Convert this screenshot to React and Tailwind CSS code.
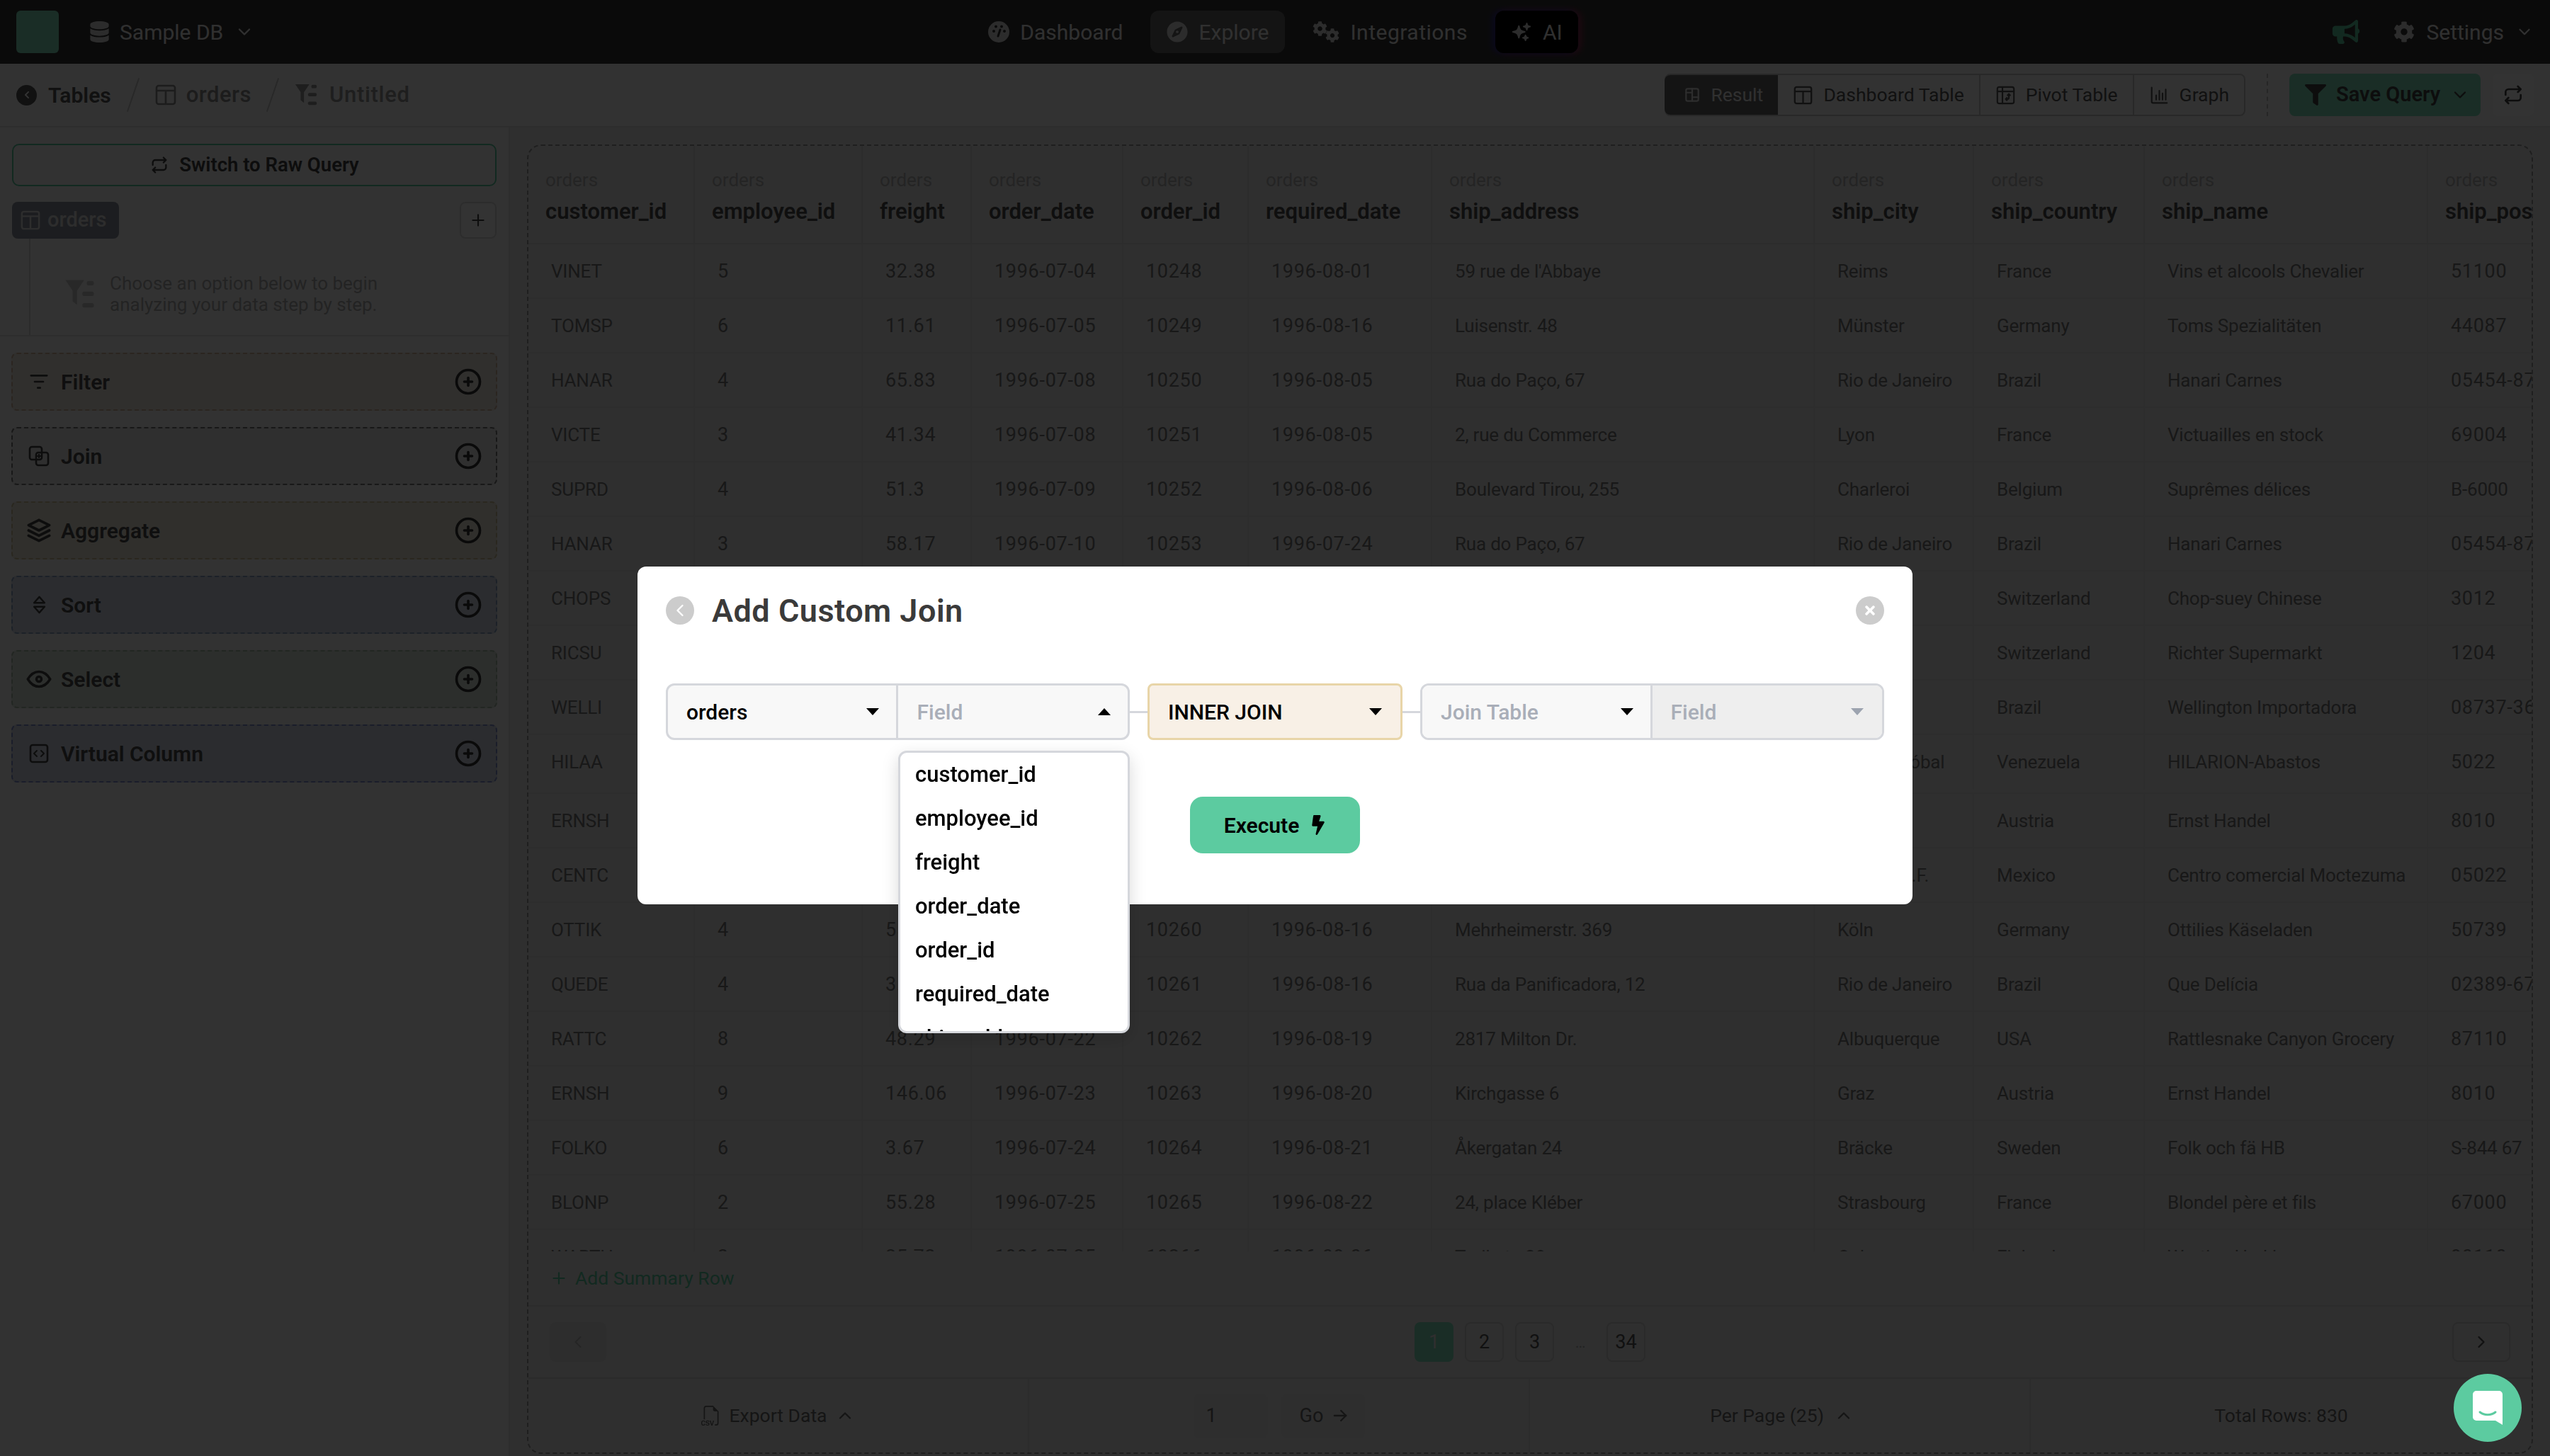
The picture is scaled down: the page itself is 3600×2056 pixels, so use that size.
import { FaCompass, FaCog, FaBullhorn, FaFilter, FaDatabase, FaChevronLeft, FaTimes, FaBolt } from "react-icons/fa";
import { HiSparkles } from "react-icons/hi2";
import { TbChevronDown, TbChevronUp, TbChevronLeft, TbChevronRight, TbPlus, TbCirclePlus, TbStack2, TbEye, TbArrowRight, TbLayoutBoard, TbRepeat } from "react-icons/tb";
import { BsFiletypeCsv } from "react-icons/bs";

const columns = [
  ["customer_id", 235],
  ["employee_id", 237],
  ["freight", 154],
  ["order_date", 214],
  ["order_id", 177],
  ["required_date", 259],
  ["ship_address", 540],
  ["ship_city", 225],
  ["ship_country", 241],
  ["ship_name", 400],
  ["ship_postal_code", 260],
];

const rows = [
  ["VINET", "5", "32.38", "1996-07-04", "10248", "1996-08-01", "59 rue de l'Abbaye", "Reims", "France", "Vins et alcools Chevalier", "51100"],
  ["TOMSP", "6", "11.61", "1996-07-05", "10249", "1996-08-16", "Luisenstr. 48", "Münster", "Germany", "Toms Spezialitäten", "44087"],
  ["HANAR", "4", "65.83", "1996-07-08", "10250", "1996-08-05", "Rua do Paço, 67", "Rio de Janeiro", "Brazil", "Hanari Carnes", "05454-876"],
  ["VICTE", "3", "41.34", "1996-07-08", "10251", "1996-08-05", "2, rue du Commerce", "Lyon", "France", "Victuailles en stock", "69004"],
  ["SUPRD", "4", "51.3", "1996-07-09", "10252", "1996-08-06", "Boulevard Tirou, 255", "Charleroi", "Belgium", "Suprêmes délices", "B-6000"],
  ["HANAR", "3", "58.17", "1996-07-10", "10253", "1996-07-24", "Rua do Paço, 67", "Rio de Janeiro", "Brazil", "Hanari Carnes", "05454-876"],
  ["CHOPS", "5", "22.98", "1996-07-11", "10254", "1996-08-08", "Hauptstr. 31", "Bern", "Switzerland", "Chop-suey Chinese", "3012"],
  ["RICSU", "9", "148.33", "1996-07-12", "10255", "1996-08-09", "Starenweg 5", "Genève", "Switzerland", "Richter Supermarkt", "1204"],
  ["WELLI", "3", "13.97", "1996-07-15", "10256", "1996-08-12", "Rua do Mercado, 12", "Resende", "Brazil", "Wellington Importadora", "08737-363"],
  ["HILAA", "4", "81.91", "1996-07-16", "10257", "1996-08-13", "Carrera 22 con Ave.", "San Cristóbal", "Venezuela", "HILARION-Abastos", "5022"],
  ["ERNSH", "1", "140.51", "1996-07-17", "10258", "1996-08-14", "Kirchgasse 6", "Graz", "Austria", "Ernst Handel", "8010"],
  ["CENTC", "4", "3.25", "1996-07-18", "10259", "1996-08-15", "Sierras de Granada 9993", "México D.F.", "Mexico", "Centro comercial Moctezuma", "05022"],
  ["OTTIK", "4", "55.09", "1996-07-19", "10260", "1996-08-16", "Mehrheimerstr. 369", "Köln", "Germany", "Ottilies Käseladen", "50739"],
  ["QUEDE", "4", "3.05", "1996-07-19", "10261", "1996-08-16", "Rua da Panificadora, 12", "Rio de Janeiro", "Brazil", "Que Delícia", "02389-673"],
  ["RATTC", "8", "48.29", "1996-07-22", "10262", "1996-08-19", "2817 Milton Dr.", "Albuquerque", "USA", "Rattlesnake Canyon Grocery", "87110"],
  ["ERNSH", "9", "146.06", "1996-07-23", "10263", "1996-08-20", "Kirchgasse 6", "Graz", "Austria", "Ernst Handel", "8010"],
  ["FOLKO", "6", "3.67", "1996-07-24", "10264", "1996-08-21", "Åkergatan 24", "Bräcke", "Sweden", "Folk och fä HB", "S-844 67"],
  ["BLONP", "2", "55.28", "1996-07-25", "10265", "1996-08-22", "24, place Kléber", "Strasbourg", "France", "Blondel père et fils", "67000"],
  ["WARTH", "3", "25.73", "1996-07-25", "10266", "1996-09-06", "Torikatu 38", "Oulu", "Finland", "Wartian Herkku", "90110"],
];

const fieldOptions = ["customer_id", "employee_id", "freight", "order_date", "order_id", "required_date", "ship_address"];

function GaugeIcon({ className }) {
  return (
    <svg viewBox="0 0 30 30" className={className}>
      <circle cx="15" cy="15" r="15" fill="currentColor" />
      <circle cx="8" cy="14" r="2" fill="#343434" />
      <circle cx="11" cy="7.5" r="2" fill="#343434" />
      <circle cx="19" cy="7.5" r="2" fill="#343434" />
      <circle cx="23" cy="14" r="2" fill="#343434" />
      <path d="M14 21l3-9" stroke="#343434" strokeWidth="3" strokeLinecap="round" />
    </svg>
  );
}

function GearsIcon() {
  return (
    <span className="flex w-[38px] h-[30px] shrink-0 text-[#dddddd]">
      <FaCog className="w-[21px] h-[21px] shrink-0 self-start" />
      <FaCog className="w-[20px] h-[20px] shrink-0 self-end -ml-[3px]" />
    </span>
  );
}

function TableSplitIcon({ className }) {
  return (
    <svg viewBox="0 0 30 30" className={className} fill="none" stroke="currentColor" strokeWidth="2.6" strokeLinejoin="round">
      <rect x="2" y="2" width="26" height="26" rx="3" />
      <path d="M2 9h26M15 9v19" />
    </svg>
  );
}

function PivotIcon({ className }) {
  return (
    <svg viewBox="0 0 30 30" className={className} fill="none" stroke="currentColor" strokeWidth="2.4" strokeLinejoin="round" strokeLinecap="round">
      <rect x="2" y="2" width="26" height="26" rx="3" />
      <path d="M2 9h26M10 2v26M20 13v6a2 2 0 0 1-2 2h-3M18 15l2-2 2 2M17 19l-2 2 2 2" />
    </svg>
  );
}

function GraphIcon({ className }) {
  return (
    <svg viewBox="0 0 30 30" className={className} fill="none" stroke="currentColor" strokeWidth="2.4" strokeLinecap="round">
      <path d="M3 3v22a2 2 0 0 0 2 2h22M10 22v-7M15 22V8M20 22V12M25 22V6" />
    </svg>
  );
}

function FilterLinesIcon({ className }) {
  return (
    <svg viewBox="0 0 30 30" className={className} fill="none" stroke="currentColor" strokeWidth="3" strokeLinecap="round">
      <path d="M2 5h26M8 15h14M13 25h4" />
    </svg>
  );
}

function JoinIcon({ className }) {
  return (
    <svg viewBox="0 0 30 30" className={className} fill="none" stroke="currentColor" strokeWidth="2.6" strokeLinejoin="round">
      <rect x="2" y="2" width="17" height="18" rx="3" />
      <rect x="11" y="10" width="17" height="18" rx="3" />
      <path d="M15 12v6M12 15h6" strokeWidth="2" />
    </svg>
  );
}

function SortIcon({ className }) {
  return (
    <svg viewBox="0 0 20 28" className={className} fill="none" stroke="currentColor" strokeWidth="2.6" strokeLinejoin="round">
      <path d="M10 2l8 9H2zM10 26L2 17h16z" />
    </svg>
  );
}

function CodeBoxIcon({ className }) {
  return (
    <svg viewBox="0 0 28 28" className={className} fill="none" stroke="currentColor" strokeWidth="2.6" strokeLinecap="round" strokeLinejoin="round">
      <rect x="2" y="2" width="24" height="24" rx="3" />
      <path d="M11 10l-4 4 4 4M17 10l4 4-4 4" strokeWidth="2" />
    </svg>
  );
}

function FunnelListIcon({ className }) {
  return (
    <svg viewBox="0 0 34 36" className={className} fill="currentColor">
      <path d="M1 2h21l-8 12v16l-5-4V14z" />
      <rect x="25" y="3" width="8" height="5" rx="2" />
      <rect x="20" y="15" width="13" height="5" rx="2" />
      <rect x="20" y="28" width="13" height="5" rx="2" />
    </svg>
  );
}

function Caret({ up, className }) {
  return (
    <svg viewBox="0 0 18 10" className={`w-[18px] h-[10px] ${className || ""}`} fill="currentColor">
      <path d={up ? "M9 0l9 10H0z" : "M0 0h18L9 10z"} />
    </svg>
  );
}

function NavItem({ icon: Icon, label, active, labelClass }) {
  return (
    <div className={`flex items-center gap-[15px] h-[60px] px-[23px] rounded-[12px] ${active ? "bg-[#646464]" : ""}`}>
      <Icon className="w-[30px] h-[30px] text-[#dddddd]" />
      <span className={`text-[30px] text-[#f0f0f0] ${labelClass || ""}`}>{label}</span>
    </div>
  );
}

function ViewTab({ icon: Icon, label, border }) {
  return (
    <div className={`flex items-center gap-[15px] h-full pl-[22px] pr-[21px] ${border ? "border-r-2 border-[#c8c8c8]" : ""}`}>
      <Icon className="w-[27px] h-[27px] text-[#555555]" />
      <span className="text-[26.5px] text-[#555555]">{label}</span>
    </div>
  );
}

function ActionCard({ icon: Icon, label, iconClass, className }) {
  return (
    <div className={`flex items-center justify-between h-[82px] pl-[22px] pr-[17px] rounded-[8px] border-2 border-dashed ${className}`}>
      <div className="flex items-center gap-[16px]">
        <span className="flex items-center justify-center w-[30px] h-[30px]">
          <Icon className={`shrink-0 text-[#444444] ${iconClass}`} />
        </span>
        <span className="text-[30px] font-semibold text-[#4a4a4a]">{label}</span>
      </div>
      <TbCirclePlus className="w-[44px] h-[44px] text-[#333333]" />
    </div>
  );
}

function PageBtn({ label, active }) {
  return (
    <div className={`flex items-center justify-center w-[55px] h-[56px] rounded-[8px] text-[27px] ${active ? "bg-[#80e0bc] text-[#e8e8e8]" : "border-2 border-[#cfcfcf] text-[#555555]"}`}>
      {label}
    </div>
  );
}

function DataTable() {
  return (
    <div className="h-[1561px] overflow-hidden">
      <div className="flex h-[139px] border-b-2 border-[#dcdcdc]">
        {columns.map(([name, width]) => (
          <div
            key={name}
            className="shrink-0 flex flex-col pl-[24px] pt-[33px] border-r-2 border-[#dcdcdc] overflow-hidden"
            style={{ width }}
          >
            <span className="text-[26px] leading-[30px] text-[#b4b4b4]">orders</span>
            <span className="mt-[12px] text-[31px] leading-[36px] font-semibold text-[#4d4d4d] whitespace-nowrap">{name}</span>
          </div>
        ))}
      </div>
      {rows.map((row, i) => (
        <div key={i} className={`flex border-b-2 border-[#e0e0e0] ${i === 9 ? "h-[83px]" : "h-[77px]"}`}>
          {row.map((cell, j) => (
            <div
              key={j}
              className={`shrink-0 h-[77px] flex items-center pl-[32px] border-r-2 border-[#e0e0e0] text-[#777777] whitespace-nowrap overflow-hidden ${/^[\d.-]+$/.test(cell) ? "text-[27px] tracking-[0.7px]" : "text-[26px] tracking-[-0.2px]"}`}
              style={{ width: columns[j][1] }}
            >
              {cell}
            </div>
          ))}
        </div>
      ))}
    </div>
  );
}

export default function App() {
  return (
    <div className="relative w-[3600px] h-[2056px] overflow-hidden flex flex-col bg-[#f4f4f4] font-['Roboto',sans-serif]">
      {/* navbar */}
      <header className="grid grid-cols-[1fr_auto_1fr] items-center h-[90px] shrink-0 bg-[#343434] px-[23px]">
        <div className="flex items-center">
          <div className="w-[60px] h-[60px] rounded-[6px] bg-[#80e0bc]" />
          <FaDatabase className="ml-[44px] w-[27px] h-[30px] text-[#dddddd]" />
          <span className="ml-[15px] text-[30px] text-[#f0f0f0]">Sample DB</span>
          <TbChevronDown className="ml-[16px] w-[28px] h-[28px] text-[#f0f0f0]" />
        </div>
        <nav className="flex items-center gap-[16px]">
          <NavItem icon={GaugeIcon} label="Dashboard" />
          <NavItem icon={FaCompass} label="Explore" active />
          <NavItem icon={GearsIcon} label="Integrations" labelClass="tracking-[0.5px]" />
          <div className="flex items-center gap-[15px] h-[60px] px-[22px] rounded-[12px] bg-[#000000] shadow-[-4px_0_10px_#2b2b90,4px_0_10px_#a02b4a]">
            <HiSparkles className="w-[30px] h-[30px] text-[#dddddd]" />
            <span className="text-[30px] text-[#f0f0f0]">AI</span>
          </div>
        </nav>
        <div className="flex items-center justify-end">
          <FaBullhorn className="w-[42px] h-[34px] text-[#5ccba0]" />
          <FaCog className="ml-[46px] w-[30px] h-[30px] text-[#dddddd]" />
          <span className="ml-[16px] text-[30px] text-[#f0f0f0]">Settings</span>
          <TbChevronDown className="ml-[16px] w-[26px] h-[26px] text-[#f0f0f0]" />
        </div>
      </header>

      {/* breadcrumb + view switcher */}
      <div className="flex items-center justify-between h-[90px] shrink-0 border-b-2 border-[#e2e2e2] bg-[#fafafa] px-[23px]">
        <div className="flex items-center">
          <div className="flex items-center justify-center w-[29px] h-[29px] rounded-full bg-[#555555]">
            <FaChevronLeft className="w-[12px] h-[12px] text-white" />
          </div>
          <span className="ml-[16px] text-[30px] font-semibold text-[#555555]">Tables</span>
          <span className="mx-[30px] w-[2px] h-[50px] rotate-[19deg] bg-[#c8c8c8]" />
          <TableSplitIcon className="w-[30px] h-[30px] text-[#8c8c8c]" />
          <span className="ml-[14px] text-[31px] font-medium text-[#8c8c8c] tracking-[0.5px]">orders</span>
          <span className="mx-[29px] w-[2px] h-[50px] rotate-[19deg] bg-[#c8c8c8]" />
          <FunnelListIcon className="w-[34px] h-[34px] text-[#969696]" />
          <span className="ml-[16px] text-[31px] font-medium text-[#969696] tracking-[0.7px]">Untitled</span>
        </div>
        <div className="flex items-center h-[60px]">
          <div className="flex items-center h-full rounded-[8px] border-2 border-[#c8c8c8]">
            <div className="flex items-center gap-[13px] h-full w-[160px] -ml-[2px] pl-[26px] rounded-l-[8px] bg-[#646464]">
              <TbLayoutBoard className="w-[26px] h-[26px] text-[#e0e0e0]" />
              <span className="text-[26.5px] text-[#eeeeee]">Result</span>
            </div>
            <ViewTab icon={TableSplitIcon} label="Dashboard Table" border />
            <ViewTab icon={PivotIcon} label="Pivot Table" border />
            <ViewTab icon={GraphIcon} label="Graph" />
          </div>
          <span className="ml-[30px] h-full border-l-2 border-dashed border-[#bdbdbd]" />
          <div className="ml-[30px] flex items-center gap-[14px] h-full w-[270px] pl-[22px] rounded-[8px] bg-[#80e0bc]">
            <FaFilter className="w-[30px] h-[30px] text-[#444444]" />
            <span className="text-[29px] font-semibold text-[#444444]">Save Query</span>
            <TbChevronDown className="w-[28px] h-[28px] text-[#444444]" />
          </div>
          <div className="ml-[17px] flex items-center justify-center w-[58px] h-full rounded-[8px] bg-[#ffffff]">
            <TbRepeat className="w-[32px] h-[32px] text-[#444444]" />
          </div>
        </div>
      </div>

      <div className="flex flex-1 min-h-0">
        {/* sidebar */}
        <aside className="w-[720px] shrink-0 border-r-2 border-[#e2e2e2] bg-[#fafafa] pt-[23px]">
          <div className="px-[17px]">
            <div className="flex items-center justify-center gap-[14px] h-[60px] rounded-[10px] border-2 border-[#5ccba0]">
              <TbRepeat className="w-[28px] h-[28px] text-[#444444]" />
              <span className="text-[27.5px] font-semibold text-[#444444]">Switch to Raw Query</span>
            </div>
            <div className="flex items-center justify-between mt-[22px]">
              <div className="flex items-center gap-[10px] h-[52px] w-[151px] pl-[12px] rounded-[8px] bg-[#8d929e]">
                <TableSplitIcon className="w-[28px] h-[28px] text-[#e0e0e0]" />
                <span className="text-[29px] font-medium text-[#e0e0e0]">orders</span>
              </div>
              <div className="flex items-center justify-center w-[52px] h-[52px] rounded-[8px] border-2 border-[#dddddd] bg-[#ffffff]">
                <TbPlus className="w-[26px] h-[26px] text-[#444444]" />
              </div>
            </div>
          </div>
          <div className="ml-[41px] h-[136px] border-l-2 border-[#d8d8d8] flex items-center pl-[47px] pt-[20px] gap-[20px]">
            <FunnelListIcon className="w-[45px] h-[45px] text-[#c8c8c8]" />
            <p className="text-[26px] leading-[30px] text-[#b0b0b0]">
              Choose an option below to begin
              <br />
              analyzing your data step by step.
            </p>
          </div>
          <div className="border-t-2 border-[#e2e2e2] flex flex-col gap-[23px] px-[16px] pt-[23px]">
            <ActionCard icon={FilterLinesIcon} iconClass="w-[28px] h-[26px]" label="Filter" className="bg-[#f0e9e2] border-[#d4b8a0]" />
            <ActionCard icon={JoinIcon} iconClass="w-[30px] h-[30px]" label="Join" className="bg-[#e8e8e8] border-[#777777]" />
            <ActionCard icon={TbStack2} iconClass="w-[44px] h-[44px]" label="Aggregate" className="bg-[#eeebdc] border-[#cfc49a]" />
            <ActionCard icon={SortIcon} iconClass="w-[19px] h-[26px]" label="Sort" className="bg-[#d6dde8] border-[#8ea5c8]" />
            <ActionCard icon={TbEye} iconClass="w-[42px] h-[42px]" label="Select" className="bg-[#dde5dc] border-[#a8bca8]" />
            <ActionCard icon={CodeBoxIcon} iconClass="w-[28px] h-[28px]" label="Virtual Column" className="bg-[#d4d9e8] border-[#8090d0]" />
          </div>
        </aside>

        {/* results panel */}
        <main className="flex-1 min-w-0 bg-[#ebebeb] pl-[24px] pr-[24px] pt-[24px] pb-[3px]">
          <div className="h-full flex flex-col rounded-[20px] border-2 border-dashed border-[#999999] overflow-hidden">
            <DataTable />
            <div className="h-[78px] shrink-0 flex items-center gap-[10px] pl-[30px] border-b-2 border-[#dcdcdc] text-[#5ccba0]">
              <TbPlus className="w-[26px] h-[26px]" />
              <span className="text-[26.5px]">Add Summary Row</span>
            </div>
            <div className="relative h-[102px] shrink-0 flex items-center justify-center border-b-2 border-[#d8d8d8]">
              <div className="absolute left-[30px] flex items-center justify-center w-[80px] h-[56px] rounded-[8px] bg-[#e2e2e2] text-[#bbbbbb]">
                <TbChevronLeft className="w-[28px] h-[28px]" />
              </div>
              <div className="flex items-center gap-[16px]">
                <PageBtn label="1" active />
                <PageBtn label="2" />
                <PageBtn label="3" />
                <span className="w-[42px] text-center text-[22px] text-[#aaaaaa]">…</span>
                <PageBtn label="34" />
              </div>
              <div className="absolute right-[30px] flex items-center justify-center w-[82px] h-[56px] rounded-[8px] border-2 border-[#cfcfcf] text-[#555555]">
                <TbChevronRight className="w-[28px] h-[28px]" />
              </div>
            </div>
            <div className="grid grid-cols-4 flex-1 min-h-0">
              <div className="flex items-center justify-center gap-[12px] border-r-2 border-[#dcdcdc] text-[#6a6a6a]">
                <BsFiletypeCsv className="w-[28px] h-[28px]" />
                <span className="text-[26.5px]">Export Data</span>
                <TbChevronUp className="w-[28px] h-[28px]" />
              </div>
              <div className="flex items-center justify-center gap-[19px] border-r-2 border-[#dcdcdc] text-[#6a6a6a]">
                <div className="flex items-center pl-[18px] w-[105px] h-[63px] rounded-[8px] bg-[#e4e4e4] text-[27px]">1</div>
                <div className="flex items-center justify-center gap-[10px] w-[118px] h-[63px] pl-[6px] rounded-[8px] bg-[#e4e4e4]">
                  <span className="text-[27px]">Go</span>
                  <TbArrowRight className="w-[28px] h-[28px]" />
                </div>
              </div>
              <div className="flex items-center justify-center gap-[14px] pl-[6px] border-r-2 border-[#dcdcdc] text-[#6a6a6a]">
                <span className="text-[26.5px]">Per Page (25)</span>
                <TbChevronUp className="w-[28px] h-[28px]" />
              </div>
              <div className="flex items-center justify-center text-[26.5px] text-[#6a6a6a]">Total Rows: 830</div>
            </div>
          </div>
        </main>
      </div>

      {/* modal */}
      <div className="fixed inset-0 z-40 flex justify-center items-center pt-[21px] bg-black/80">
        <div className="w-[1800px] h-[477px] rounded-[12px] bg-white px-[40px] pt-[42px]">
          <div className="flex items-center justify-between h-[40px]">
            <div className="flex items-center gap-[25px]">
              <div className="flex items-center justify-center w-[40px] h-[40px] rounded-full bg-[#cccccc]">
                <TbChevronLeft className="w-[28px] h-[28px] text-white" />
              </div>
              <h2 className="pt-[2px] text-[45px] font-semibold text-[#3a3a3a] tracking-[0.5px]">Add Custom Join</h2>
            </div>
            <div className="flex items-center justify-center w-[40px] h-[40px] rounded-full bg-[#cccccc]">
              <FaTimes className="w-[20px] h-[20px] text-white" />
            </div>
          </div>

          <div className="flex items-center mt-[83px] h-[80px]">
            <div className="relative flex w-[655px] h-full rounded-[12px] border-[3px] border-[#d5d7dc] bg-[#f8f8f8]">
              <div className="flex items-center justify-between w-1/2 pl-[26px] pr-[24px] border-r-[3px] border-[#d5d7dc]">
                <span className="text-[30px] font-medium text-black">orders</span>
                <Caret className="text-black" />
              </div>
              <div className="flex items-center justify-between w-1/2 pl-[27px] pr-[24px]">
                <span className="text-[30px] font-medium text-[#a9aeb8]">Field</span>
                <Caret up className="text-black" />
              </div>
              {/* open field menu */}
              <div className="absolute z-10 left-[325px] top-[92px] w-[327px] h-[399px] overflow-hidden rounded-[12px] border-[3px] border-[#d5d7dc] bg-white shadow-[0_8px_24px_rgba(0,0,0,0.15)]">
                <ul className="pl-[21px]">
                  {fieldOptions.map((opt) => (
                    <li key={opt} className="flex items-center h-[62px] text-[31px] font-medium text-black">{opt}</li>
                  ))}
                </ul>
              </div>
            </div>
            <span className="w-[25px] h-[3px] bg-[#d5d7dc]" />
            <div className="flex items-center justify-between w-[360px] h-full pl-[26px] pr-[26px] rounded-[8px] border-[3px] border-[#e8d5a8] bg-[#f8f0e6]">
              <span className="text-[30px] font-medium text-black">INNER JOIN</span>
              <Caret className="text-black" />
            </div>
            <span className="w-[25px] h-[3px] bg-[#d5d7dc]" />
            <div className="flex w-[655px] h-full rounded-[12px] border-[3px] border-[#d5d7dc] overflow-hidden">
              <div className="flex items-center justify-between w-1/2 pl-[26px] pr-[24px] border-r-[3px] border-[#d5d7dc] bg-[#f8f8f8]">
                <span className="text-[30px] font-medium text-[#a9aeb8]">Join Table</span>
                <Caret className="text-black" />
              </div>
              <div className="flex items-center justify-between w-1/2 pl-[26px] pr-[26px] bg-[#eeeeee]">
                <span className="text-[30px] font-medium text-[#a9aeb8]">Field</span>
                <Caret className="text-[#9ca3af]" />
              </div>
            </div>
          </div>

          <div className="flex justify-center mt-[80px]">
            <div className="flex items-center justify-center gap-[16px] w-[240px] h-[80px] rounded-[18px] bg-[#5ccba0]">
              <span className="text-[30px] font-semibold text-black">Execute</span>
              <FaBolt className="w-[22px] h-[28px] text-black" />
            </div>
          </div>
        </div>
      </div>

      {/* chat launcher */}
      <div className="fixed z-50 right-[40px] bottom-[20px] flex items-center justify-center w-[96px] h-[96px] rounded-full bg-[#5ccba0]">
        <svg viewBox="0 0 42 48" className="w-[42px] h-[48px]">
          <path d="M5 0h32a5 5 0 0 1 5 5v43l-10-6H5a5 5 0 0 1-5-5V5a5 5 0 0 1 5-5z" fill="#ffffff" />
          <path d="M10 30c6 5 16 5 22 0" fill="none" stroke="#5ccba0" strokeWidth="3" strokeLinecap="round" />
        </svg>
      </div>
    </div>
  );
}
